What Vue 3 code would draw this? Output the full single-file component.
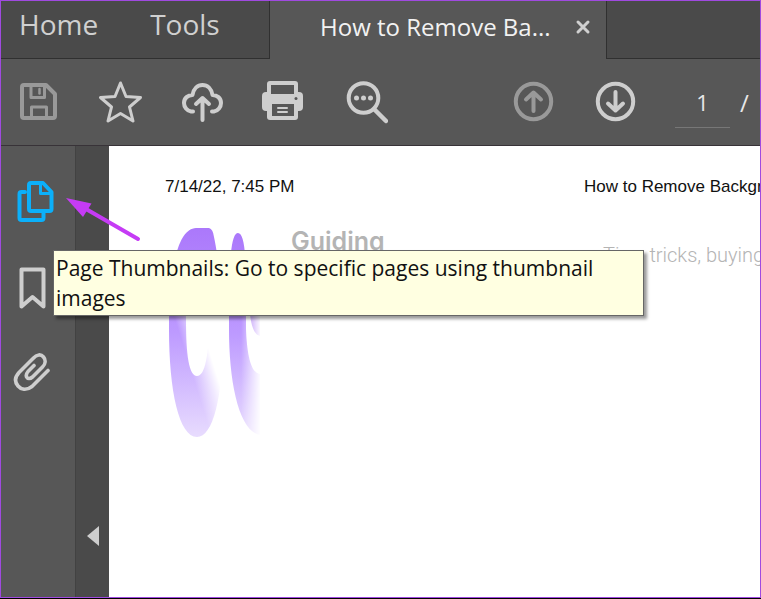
<script setup>
import { ref } from 'vue'

const page = ref('1')
</script>

<template>
  <div class="window">
    <nav class="tabs" aria-label="Documents">
      <div class="menu">
        <button class="menu-item">Home</button>
        <button class="menu-item">Tools</button>
      </div>
      <div class="tab">
        <span class="tab-title">How to Remove Ba...</span>
        <button class="close" aria-label="Close tab">
          <svg viewBox="0 0 16 16"><path d="M3 3L13 13M13 3L3 13" stroke-width="3" /></svg>
        </button>
      </div>
      <div class="tab-rest"></div>
    </nav>

    <div class="toolbar">
      <button class="icon dim" aria-label="Save">
        <svg viewBox="0 0 44 44">
          <path d="M8 5H30L39 14V36Q39 38 37 38H8Q6 38 6 36V7Q6 5 8 5Z" stroke-width="4" />
          <path d="M15 5V17.5H28.5V5M15.5 38V27H30.5V38" stroke-width="3" />
          <path d="M23.5 9V13.5" stroke-width="2.5" />
        </svg>
      </button>
      <button class="icon" aria-label="Star">
        <svg viewBox="0 0 44 44">
          <path d="M22.5 3L28 16.5L42.5 17.5L31.5 27L35 41L22.5 33.5L10 41L13.500 27L2.500 17.500L17 16.500Z" stroke-width="3" />
        </svg>
      </button>
      <button class="icon" aria-label="Upload to cloud">
        <svg viewBox="0 0 44 44">
          <path d="M13 31.5H11C7 31 4 27 4 23C4 18 8 15 12.5 15C13.5 9 17.5 5 22.5 5C27.5 5 31.5 9 32.5 15C37 15 41 18 41 23C41 27 38 31 34 31.5H32" stroke-width="4" />
          <path d="M22.5 40V18M16 24L22.5 18L29 24" stroke-width="4" />
        </svg>
      </button>
      <button class="icon" aria-label="Print">
        <svg viewBox="0 0 44 44">
          <rect class="solid" x="0" y="12" width="41" height="19" rx="4" />
          <rect class="solid" x="5" y="1" width="31" height="39" rx="3" />
          <rect class="hole" x="9" y="5" width="23" height="9" />
          <rect class="hole" x="10" y="24" width="22" height="12" />
          <circle class="hole" cx="34" cy="18.5" r="1.5" />
          <path d="M16 28H25M16 32H25" stroke-width="2" />
        </svg>
      </button>
      <button class="icon" aria-label="Find text">
        <svg viewBox="0 0 44 44">
          <circle cx="19.5" cy="18" r="14.8" stroke-width="4" />
          <path d="M31 30L42 41" stroke-width="4.5" />
          <circle class="solid" cx="12.5" cy="18" r="2.5" />
          <circle class="solid" cx="19.5" cy="18" r="2.5" />
          <circle class="solid" cx="26.5" cy="18" r="2.5" />
        </svg>
      </button>
      <div class="pager">
        <button class="icon dim" aria-label="Previous page">
          <svg viewBox="0 0 44 44">
            <circle cx="22.5" cy="21.5" r="17.7" stroke-width="4" />
            <path d="M22.5 31V13M15 19.5L22.5 12.5L30 19.5" stroke-width="4" />
          </svg>
        </button>
        <button class="icon" aria-label="Next page">
          <svg viewBox="0 0 44 44">
            <circle cx="22.5" cy="21.5" r="17.7" stroke-width="4" />
            <path d="M22.5 12V30M15 23.5L22.5 30.5L30 23.5" stroke-width="4" />
          </svg>
        </button>
        <input v-model="page" class="page-number" type="text" aria-label="Page number" />
        <span class="slash">/</span>
      </div>
    </div>

    <div class="body">
      <aside class="sidebar">
        <button class="icon active" aria-label="Page Thumbnails" aria-describedby="tip">
          <svg viewBox="0 0 44 44">
            <path d="M13 13H9.5Q7.5 13 7.5 15V39Q7.5 41 9.5 41H29.5Q31.5 41 31.5 39V34" stroke-width="4" />
            <path d="M19 4H31L39.5 13V30Q39.5 32 37.5 32H19Q17 32 17 30V6Q17 4 19 4Z" stroke-width="4" />
            <path d="M28.5 5V14.5H38.5" stroke-width="3" />
          </svg>
        </button>
        <button class="icon" aria-label="Bookmarks">
          <svg viewBox="0 0 44 44">
            <path d="M9.5 4.5H31.5V41.5L20.5 32L9.5 41.5Z" stroke-width="4" />
          </svg>
        </button>
        <button class="icon" aria-label="Attachments">
          <svg viewBox="0 0 44 44">
            <path d="M36 19.5L20 35.5C14 40 9 38.5 6 35C2.5 31 3 26 7 21.5L21 7.5C25 3 29 3 31.5 6C34 9 33.5 13 30.5 16L20.5 26C18 28 16 28 15 26.5C13.5 24.5 14 23 16 20.5L22 14.5" stroke-width="3.6" />
          </svg>
        </button>

        <div id="tip" class="tooltip" role="tooltip">Page Thumbnails: Go to specific pages using thumbnail images</div>
        <svg class="pointer" viewBox="0 0 76 46" aria-hidden="true">
          <path class="shaft" d="M20 11L72 41" />
          <path class="head" d="M0 0L25.5 5.5L17 19Z" />
        </svg>
      </aside>

      <div class="splitter">
        <button class="collapse" aria-label="Collapse pane">
          <svg viewBox="0 0 12 20"><path d="M0 10L12 0V20Z" /></svg>
        </button>
      </div>

      <main class="document">
        <header class="running-head">
          <span>7/14/22, 7:45 PM</span>
          <span>How to Remove Backgr</span>
        </header>
        <section class="masthead">
          <svg class="logo" viewBox="0 0 104 216" aria-hidden="true">
            <defs>
              <linearGradient id="down" x1="0" y1="0" x2="0" y2="1">
                <stop offset="0" stop-color="#ab78fb" />
                <stop offset="0.5" stop-color="#bd9aff" />
                <stop offset="1" stop-color="#e8dcfe" />
              </linearGradient>
              <linearGradient id="fade" gradientUnits="userSpaceOnUse" x1="20" y1="160" x2="52" y2="150">
                <stop offset="0.3" stop-color="#fff" />
                <stop offset="1" stop-color="#fff" stop-opacity="0" />
              </linearGradient>
              <linearGradient id="edge" gradientUnits="userSpaceOnUse" x1="76" y1="0" x2="96" y2="0">
                <stop offset="0" stop-color="#fff" />
                <stop offset="1" stop-color="#fff" stop-opacity="0" />
              </linearGradient>
              <mask id="left-mask" maskUnits="userSpaceOnUse" x="0" y="0" width="104" height="216">
                <rect width="104" height="60" fill="#fff" />
                <rect y="60" width="104" height="156" fill="url(#fade)" />
              </mask>
              <mask id="right-mask" maskUnits="userSpaceOnUse" x="0" y="0" width="104" height="216">
                <rect width="104" height="60" fill="#fff" />
                <rect y="60" width="104" height="156" fill="url(#edge)" />
              </mask>
            </defs>
            <path
              d="M31 3H44Q48 4 49 12C53 30 58 70 58 112C58 172 48 212 32 212C14 212 4 166 4 104C4 60 9 4 31 3ZM32 40C24 40 21 66 21 94C21 130 24 151 32 151C40 151 44 130 44 94C44 66 40 40 32 40Z"
              fill="url(#down)"
              fill-rule="evenodd"
              mask="url(#left-mask)"
            />
            <path
              d="M73 8C68 8 65 22 64 64V104C64 158 74 206 95 210V149C86 148 82 130 81 104V60C81 28 79 8 73 8Z"
              fill="url(#down)"
              mask="url(#right-mask)"
            />
            <path d="M85 88C86 100 89 110 95 111V88Z" fill="#a873f8" mask="url(#right-mask)" />
          </svg>
          <h1>Guiding</h1>
          <p>Tips, tricks, buying</p>
        </section>
      </main>
    </div>
  </div>
</template>

<style>
body {
  margin: 0;
  background: #000;
}
</style>

<style scoped>
* {
  box-sizing: border-box;
}
.window {
  display: flex;
  flex-direction: column;
  min-height: calc(100vh - 1px);
  border: 1px solid #a04ae0;
  background: #575757;
  overflow: hidden;
  font-family: "Open Sans", "Noto Sans", sans-serif;
  color: #d0d0d0;
}
button {
  padding: 0;
  border: 0;
  background: none;
  color: inherit;
  font: inherit;
}
svg {
  display: block;
  fill: none;
  stroke: currentColor;
  stroke-linecap: round;
  stroke-linejoin: round;
}

.tabs {
  display: flex;
  height: 58px;
}
.menu {
  display: flex;
  align-items: flex-start;
  gap: 52px;
  width: 269px;
  padding: 3px 0 0 18px;
  border-right: 1px solid #303030;
  border-bottom: 1px solid #303030;
  background: #4a4a4a;
}
.menu-item {
  font-size: 28px;
  line-height: 40px;
}
.tab {
  display: flex;
  align-items: center;
  justify-content: space-between;
  width: 336px;
  padding: 0 15px 7px 50px;
}
.tab-title {
  color: #f2f2f2;
  font-size: 24px;
  line-height: 40px;
  white-space: nowrap;
}
.close svg {
  width: 16px;
  height: 16px;
}
.tab-rest {
  flex: 1;
  border-left: 1px solid #303030;
  border-bottom: 1px solid #303030;
  background: #4a4a4a;
}

.toolbar {
  display: flex;
  align-items: center;
  gap: 38px;
  height: 87px;
  padding-left: 15px;
  border-bottom: 1px solid #383338;
}
.icon {
  flex: none;
  width: 44px;
  height: 44px;
  color: #cecece;
}
.icon svg {
  width: 44px;
  height: 44px;
}
.dim {
  color: #999;
}
.solid {
  fill: currentColor;
  stroke: none;
}
.hole {
  fill: #575757;
  stroke: none;
}
.pager {
  display: flex;
  align-items: center;
  gap: 38px;
  margin-left: 85px;
}
.page-number {
  width: 55px;
  height: 52px;
  padding: 0;
  border: 0;
  border-bottom: 1px solid #777;
  background: none;
  color: #e8e8e8;
  font: 22px "Open Sans", "Noto Sans", sans-serif;
  text-align: center;
}
.slash {
  margin-left: -28px;
  color: #e8e8e8;
  font-size: 24px;
}

.body {
  display: flex;
  flex: 1;
}
.sidebar {
  position: relative;
  display: flex;
  flex-direction: column;
  align-items: flex-start;
  gap: 42px;
  width: 75px;
  padding: 33px 0 0 11px;
  border-right: 1px solid #424242;
}
.sidebar .active {
  color: #0bb0fa;
}
.tooltip {
  position: absolute;
  z-index: 2;
  top: 104px;
  left: 52px;
  width: 591px;
  padding: 2px;
  border: 1px solid #666;
  background: #ffffe1;
  box-shadow: 3px 3px 3px rgba(0, 0, 0, 0.4);
  color: #111;
  font-size: 21px;
  line-height: 30px;
}
.pointer {
  position: absolute;
  z-index: 3;
  top: 52px;
  left: 65px;
  width: 76px;
  height: 46px;
}
.shaft {
  stroke: #c53bf5;
  stroke-width: 4;
}
.head {
  fill: #c53bf5;
  stroke: none;
}
.splitter {
  display: flex;
  flex-direction: column;
  justify-content: flex-end;
  align-items: center;
  width: 33px;
  padding-bottom: 51px;
  background: #4a4a4a;
}
.collapse svg {
  width: 12px;
  height: 20px;
  fill: #cecece;
  stroke: none;
}

.document {
  flex: 1;
  min-width: 0;
  overflow: hidden;
  padding: 31px 0 0 56px;
  background: #fff;
}
.running-head {
  display: grid;
  grid-template-columns: 419px 1fr;
  color: #111;
  font: 17px/20px "Liberation Sans", sans-serif;
  white-space: nowrap;
}
.masthead {
  display: grid;
  grid-template-columns: 104px 290px 1fr;
  align-items: start;
  column-gap: 22px;
  padding-top: 28px;
  color: #b4b4b4;
}
.logo {
  width: 104px;
  height: 216px;
  stroke: none;
}
h1 {
  margin: 0;
  font: 600 25px/32px Inter, sans-serif;
}
p {
  margin: 16px 0 0;
  font: 300 20px/28px Roboto, sans-serif;
  white-space: nowrap;
}
</style>
